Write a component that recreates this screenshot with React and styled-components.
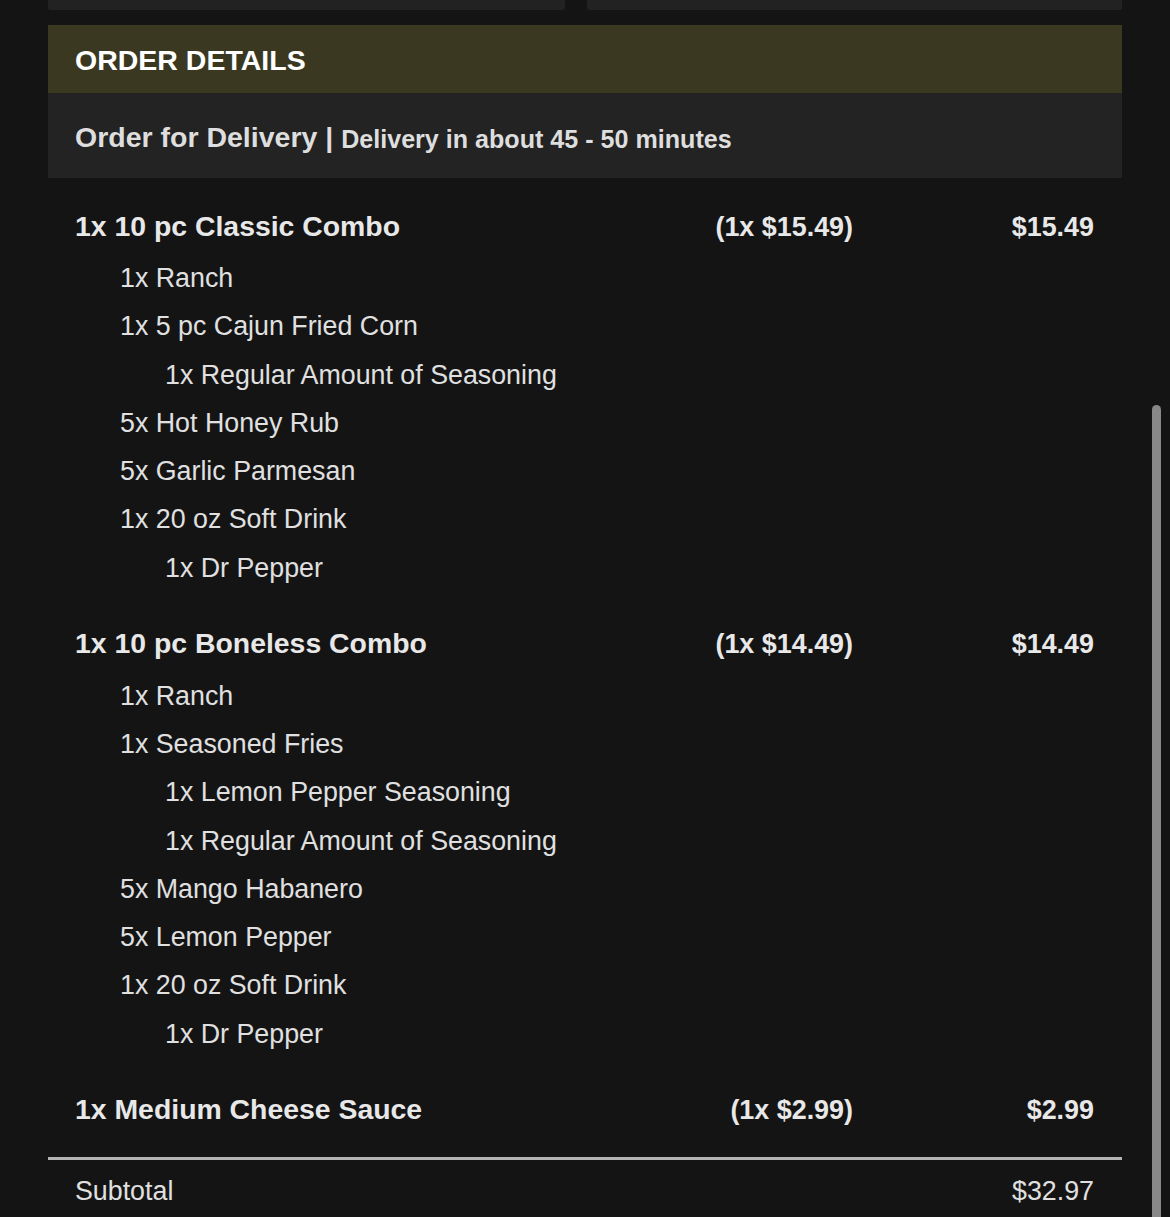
import React from 'react'
import styled, { createGlobalStyle } from 'styled-components'

const GlobalStyle = createGlobalStyle`
  body {
    margin: 0;
    background: #141414;
    font-family: "Liberation Sans", Arial, sans-serif;
    color: #e6e6e6;
  }
`

const ORDER = [
  {
    name: '1x 10 pc Classic Combo',
    unit: '(1x $15.49)',
    total: '$15.49',
    options: [
      ['1x Ranch', 1],
      ['1x 5 pc Cajun Fried Corn', 1],
      ['1x Regular Amount of Seasoning', 2],
      ['5x Hot Honey Rub', 1],
      ['5x Garlic Parmesan', 1],
      ['1x 20 oz Soft Drink', 1],
      ['1x Dr Pepper', 2],
    ],
  },
  {
    name: '1x 10 pc Boneless Combo',
    unit: '(1x $14.49)',
    total: '$14.49',
    options: [
      ['1x Ranch', 1],
      ['1x Seasoned Fries', 1],
      ['1x Lemon Pepper Seasoning', 2],
      ['1x Regular Amount of Seasoning', 2],
      ['5x Mango Habanero', 1],
      ['5x Lemon Pepper', 1],
      ['1x 20 oz Soft Drink', 1],
      ['1x Dr Pepper', 2],
    ],
  },
  {
    name: '1x Medium Cheese Sauce',
    unit: '(1x $2.99)',
    total: '$2.99',
    options: [],
  },
]

export default function App() {
  return (
    <>
      <GlobalStyle />
      <Page>
        <TopCards>
          <TopCard />
          <TopCard />
        </TopCards>
        <Section>
          <SectionHeader>ORDER DETAILS</SectionHeader>
          <SubHeader>
            Order for Delivery | <small>Delivery in about 45 - 50 minutes</small>
          </SubHeader>
          <ItemList>
            {ORDER.map((item) => (
              <ItemGroup key={item.name}>
                <ItemRow>
                  <ItemName>{item.name}</ItemName>
                  <UnitPrice>{item.unit}</UnitPrice>
                  <Total>{item.total}</Total>
                </ItemRow>
                {item.options.map(([label, level], i) => (
                  <Option key={i} level={level}>{label}</Option>
                ))}
              </ItemGroup>
            ))}
          </ItemList>
          <Divider />
          <SubtotalRow>
            <span>Subtotal</span>
            <span>$32.97</span>
          </SubtotalRow>
        </Section>
      </Page>
      <Scrollbar />
    </>
  )
}

const Page = styled.div`
  padding: 0 48px;
  height: 1217px;
  overflow: hidden;
`

const TopCards = styled.div`
  display: grid;
  grid-template-columns: 517px 1fr;
  gap: 22px;
  margin-bottom: 15px;
`

const TopCard = styled.div`
  height: 10px;
  background: #222222;
  border-radius: 0 0 2px 2px;
`

const Section = styled.section`
  display: flex;
  flex-direction: column;
`

const SectionHeader = styled.h2`
  margin: 0;
  height: 68px;
  display: flex;
  align-items: center;
  padding: 2px 27px 0;
  box-sizing: border-box;
  background: #3a3820;
  color: #ffffff;
  font-size: 28.5px;
  font-weight: 700;
`

const SubHeader = styled.div`
  height: 85px;
  display: flex;
  align-items: center;
  padding: 4px 27px 0;
  box-sizing: border-box;
  background: #232323;
  color: #dedede;
  font-size: 28.5px;
  font-weight: 700;
  white-space: pre;

  small {
    font-size: 25.1px;
    margin-top: 3px;
  }
`

const ItemList = styled.div`
  display: flex;
  flex-direction: column;
  gap: 24px;
  padding: 20px 28px 0 27px;
`

const ItemGroup = styled.div`
  display: flex;
  flex-direction: column;
`

const ItemRow = styled.div`
  display: grid;
  grid-template-columns: 1fr auto 241px;
  align-items: center;
  height: 56px;
  font-weight: 700;
  color: #e8e8e8;
`

const ItemName = styled.span`
  font-size: 28.4px;
`

const UnitPrice = styled.span`
  font-size: 26.9px;
  text-align: right;
  margin-top: 2px;
`

const Total = styled.span`
  font-size: 26.9px;
  text-align: right;
  margin-top: 2px;
`

const Option = styled.div`
  height: 48.25px;
  line-height: 48.25px;
  padding-left: ${(p) => p.level * 45}px;
  font-size: 26.8px;
  color: #e0e0e0;
`

const Divider = styled.hr`
  margin: 19px 0 0;
  border: 0;
  height: 3px;
  background: #b4b4b4;
`

const SubtotalRow = styled.div`
  display: flex;
  justify-content: space-between;
  align-items: center;
  height: 36px;
  margin-top: 14px;
  padding: 0 28px 0 27px;
  font-size: 26.8px;
  color: #e0e0e0;
`

const Scrollbar = styled.div`
  position: fixed;
  top: 405px;
  right: 9px;
  width: 9px;
  height: 830px;
  border-radius: 5px;
  background: #888888;
`
